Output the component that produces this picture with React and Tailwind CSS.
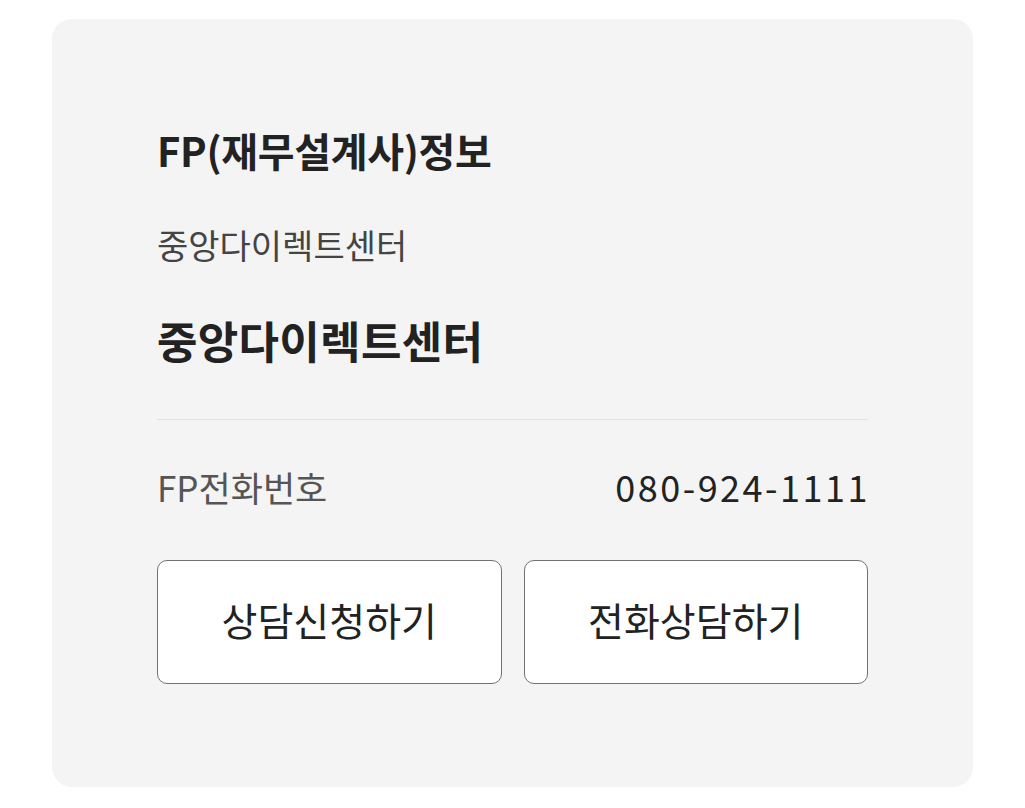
export default function App() {
  return (
    <div className="min-h-[808px] bg-white pt-[19px] px-[52px]" style={{ fontFamily: '"Noto Sans CJK KR", "Noto Sans", sans-serif' }}>
      <div className="bg-[#f4f4f4] rounded-[20px] pt-[106px] pb-[103px] px-[105px]">
        <h2 className="text-[40px] leading-[50px] font-bold text-[#222] tracking-[-0.3px]">FP(재무설계사)정보</h2>
        <p className="mt-[47px] text-[34px] leading-[46px] text-[#444]">중앙다이렉트센터</p>
        <p className="mt-[44px] text-[44px] leading-[56px] font-bold text-[#222] tracking-[0.3px]">중앙다이렉트센터</p>
        <div className="mt-[51px] h-px bg-[#e2e2e2]" />
        <div className="mt-[44px] flex items-center justify-between h-[46px]">
          <span className="text-[35px] text-[#555] leading-[46px]">FP전화번호</span>
          <span className="text-[36px] text-[#222] leading-[46px] tracking-[2.5px] mr-[-2px] pb-[3px]">080-924-1111</span>
        </div>
        <div className="mt-[50px] grid grid-cols-2 gap-[22px]">
          <button className="h-[124px] pb-[5px] bg-white border-[1.5px] border-[#727272] rounded-[10px] text-[39px] text-[#222] font-normal">상담신청하기</button>
          <button className="h-[124px] pb-[5px] bg-white border-[1.5px] border-[#727272] rounded-[10px] text-[39px] text-[#222] font-normal">전화상담하기</button>
        </div>
      </div>
    </div>
  );
}
